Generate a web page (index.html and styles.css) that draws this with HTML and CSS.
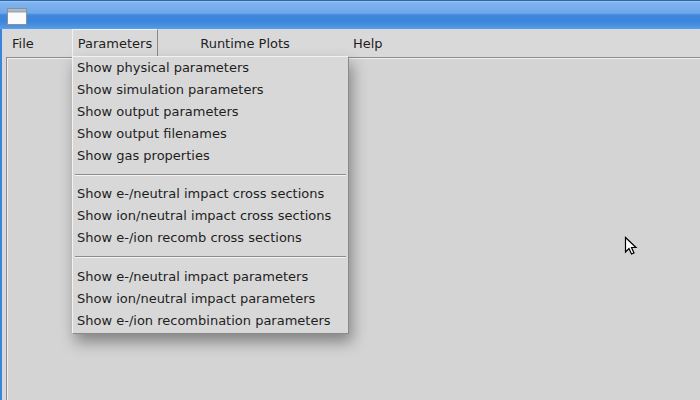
FILE: index.html
```html
<!DOCTYPE html>
<html>
<head>
<meta charset="utf-8">
<link rel="stylesheet" href="styles.css">
</head>
<body>
<div class="window">
  <div class="titlebar">
    <div class="winicon"><div class="winicon-bar"></div></div>
  </div>
  <div class="menubar">
    <div class="mitem m-file">File</div>
    <div class="mitem m-params active">Parameters</div>
    <div class="mitem m-plots">Runtime Plots</div>
    <div class="mitem m-help">Help</div>
  </div>
  <div class="content">
    <div class="frame"></div>
  </div>
</div>

<div class="dropdown">
  <div class="ditem">Show physical parameters</div>
  <div class="ditem">Show simulation parameters</div>
  <div class="ditem">Show output parameters</div>
  <div class="ditem">Show output filenames</div>
  <div class="ditem">Show gas properties</div>
  <div class="sep"></div>
  <div class="ditem">Show e-/neutral impact cross sections</div>
  <div class="ditem">Show ion/neutral impact cross sections</div>
  <div class="ditem">Show e-/ion recomb cross sections</div>
  <div class="sep sep-wide"></div>
  <div class="ditem">Show e-/neutral impact parameters</div>
  <div class="ditem">Show ion/neutral impact parameters</div>
  <div class="ditem">Show e-/ion recombination parameters</div>
</div>

<svg class="cursor" width="14" height="20" viewBox="0 0 14 20">
  <path d="M1.5 1.5 L1.5 16 L5 12.5 L7.5 18 L10 17 L7.5 11.5 L12 11.5 Z" fill="#fff" stroke="#000" stroke-width="1.2" stroke-linejoin="miter"/>
</svg>
</body>
</html>
```

FILE: styles.css
```css
html, body {
  margin: 0;
  padding: 0;
  width: 700px;
  height: 400px;
  overflow: hidden;
  background: #d4d4d4;
  font-family: "DejaVu Sans", sans-serif;
  font-size: 13px;
  color: #1e1e1e;
}

.window {
  position: relative;
  width: 700px;
  height: 400px;
  display: flex;
  flex-direction: column;
}

.titlebar {
  height: 28px;
  border-top: 1px solid #2f66ad;
  background: linear-gradient(to bottom,
    #9cc6f2 0px, #7fb3ee 2px, #6ea8ea 12px,
    #3f88dc 14px, #3a84da 20px, #4f95e3 26px, #5d9fe9 28px);
  display: flex;
  align-items: center;
  padding-left: 7px;
  box-sizing: content-box;
}

.winicon {
  width: 18px;
  height: 15px;
  border: 1px solid #8a9098;
  background: #fbfbfb;
  margin-top: 2px;
}
.winicon-bar {
  height: 3px;
  background: linear-gradient(to bottom, #b7c3d2, #97a6b8);
  border-bottom: 1px solid #c8ced6;
}

.menubar {
  height: 28px;
  background: #d9d9d9;
  border-left: 2px solid #3a84da;
  display: flex;
  align-items: stretch;
}

.mitem {
  display: flex;
  align-items: center;
  padding: 0 6px;
  box-sizing: border-box;
}
.m-file { margin-left: 4px; }
.m-params { margin-left: 32px; }
.m-plots { margin-left: 36px; }
.m-help { margin-left: 51px; }

.mitem.active {
  border-top: 1px solid #f2f2f2;
  border-left: 1px solid #f2f2f2;
  border-right: 1px solid #8a8a8a;
  padding: 0 5px;
  padding-bottom: 1px;
}

.content {
  flex: 1;
  border-left: 2px solid #3a84da;
  background: #d8d8d8;
  display: flex;
  padding-left: 4px;
}

.frame {
  flex: 1;
  border-top: 1px solid #8e8e8e;
  border-left: 1px solid #8e8e8e;
  box-shadow: inset 1px 1px 0 #efefef;
  background: #d4d4d4;
}

.dropdown {
  position: absolute;
  left: 72px;
  top: 56px;
  width: 275px;
  background: #d8d8d8;
  border-top: 1px solid #f2f2f2;
  border-left: 1px solid #f2f2f2;
  border-right: 1px solid #8a8a8a;
  border-bottom: 1px solid #8a8a8a;
  padding: 0 0 1px 0;
  box-shadow: 3px 8px 14px rgba(0, 0, 0, 0.38);
}

.ditem {
  height: 22px;
  line-height: 22px;
  padding-left: 4px;
  white-space: nowrap;
}

.sep {
  height: 16px;
  display: flex;
  flex-direction: column;
  justify-content: center;
  padding: 0 2px;
}
.sep.sep-wide {
  height: 17px;
  justify-content: flex-start;
  padding-top: 7px;
  box-sizing: border-box;
}
.sep::before {
  content: "";
  display: block;
  height: 1px;
  background: #8c8c8c;
}
.sep::after {
  content: "";
  display: block;
  height: 1px;
  background: #f4f4f4;
}

.cursor {
  position: absolute;
  left: 624px;
  top: 236px;
}
```
